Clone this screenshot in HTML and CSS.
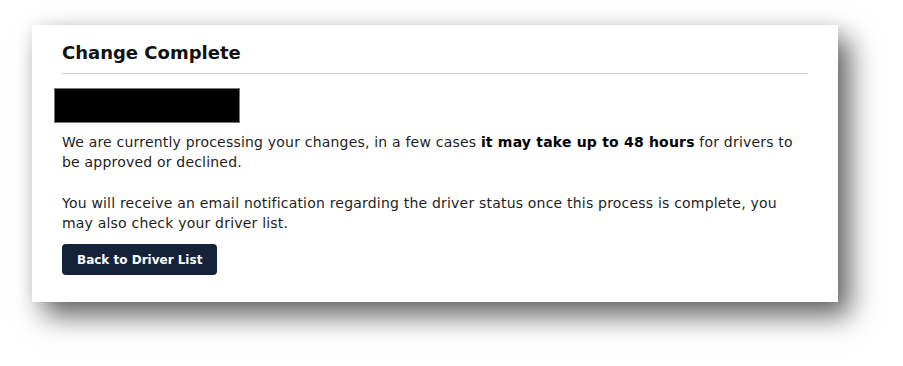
FILE: index.html
```html
<!DOCTYPE html>
<html lang="en">
<head>
    <meta charset="UTF-8">
    <meta name="viewport" content="width=device-width, initial-scale=1.0">
    <title>Change Complete</title>
    <link rel="stylesheet" href="styles.css">
</head>
<body>
    <div class="card">
        <h2 class="card-title">Change Complete</h2>
        <div class="redacted"></div>
        <p class="message">
            We are currently processing your changes, in a few cases <strong>it may take up to 48 hours</strong> for drivers to be approved or declined.
        </p>
        <p class="message">
            You will receive an email notification regarding the driver status once this process is complete, you may also check your driver list.
        </p>
        <button class="back-btn">Back to Driver List</button>
    </div>
</body>
</html>
```

FILE: styles.css
```css
html {
    height: 100%;
}

body {
    font-family: "DejaVu Sans", sans-serif;
    margin: 0;
    min-height: 100%;
    box-sizing: border-box;
    padding: 25px 0 0 32px;
    background-color: #fff;
    color: #1e1e1e;
}

.card {
    width: 806px;
    box-sizing: border-box;
    padding: 16px 30px 27px 30px;
    background-color: #fff;
    box-shadow: 12px 14px 26px rgba(0, 0, 0, 0.6), 0 0 14px rgba(0, 0, 0, 0.08);
}

.card-title {
    font-size: 18px;
    font-weight: bold;
    line-height: 24px;
    margin: 0;
    padding-bottom: 8px;
    border-bottom: 1px solid #cfcfcf;
    color: #111;
}

.redacted {
    width: 186px;
    height: 35px;
    margin: 14px 0 0 -8px;
    background-color: #000;
    border: 1px solid #777;
    box-sizing: border-box;
}

.message {
    font-size: 14px;
    letter-spacing: 0.2px;
    line-height: 20px;
    margin: 9px 0 0 0;
}

.message + .message {
    margin-top: 21px;
}

.message strong {
    color: #000;
}

.back-btn {
    display: block;
    margin-top: 11px;
    height: 31px;
    padding: 0 15px;
    background-color: #15233a;
    color: #fff;
    font-family: inherit;
    font-size: 12px;
    font-weight: bold;
    border: none;
    border-radius: 4px;
}
```
